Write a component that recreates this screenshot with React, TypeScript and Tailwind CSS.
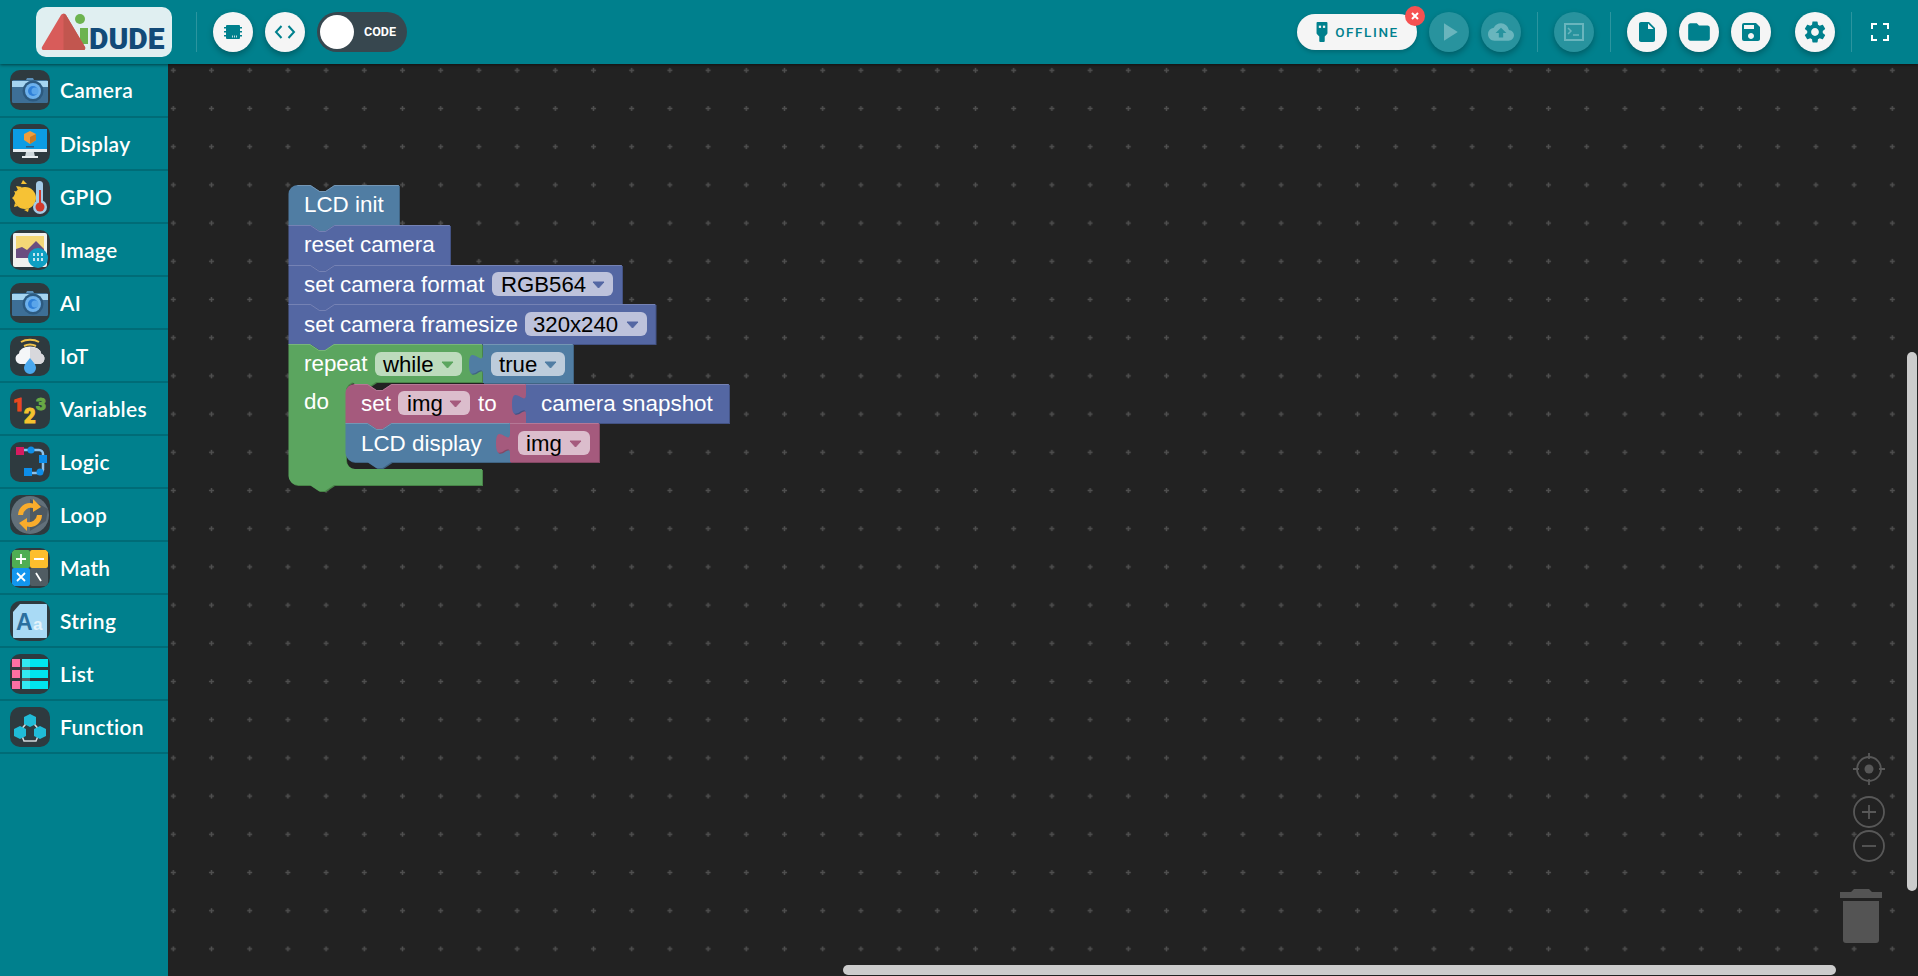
import type { ReactNode } from 'react'
import { MdCloudUpload, MdFolder, MdInsertDriveFile, MdPlayArrow, MdSave, MdSettings } from 'react-icons/md'

const TEAL = '#00808d'

const CameraIcon = () => (
  <>
    <path d="M8 10 h8 l1-2 h6 l1 2 h8 v4 H8z" fill="#5a8fb8" />
    <rect x="2" y="10" width="36" height="23" rx="1.5" fill="#3d6f96" />
    <rect x="2" y="11" width="36" height="6" fill="#a5d4f0" />
    <circle cx="23" cy="21" r="10.5" fill="#2c5a80" />
    <circle cx="23" cy="21" r="8" fill="#6db1ec" />
    <circle cx="23" cy="21" r="5" fill="#2f80d8" />
    <circle cx="25" cy="21" r="3.5" fill="#5aa5ea" />
  </>
)

const ICONS: Record<string, ReactNode> = {
  Camera: <CameraIcon />,
  Display: (
    <>
      <rect x="3" y="5" width="34" height="23" fill="#0c9ce4" />
      <rect x="3" y="25" width="34" height="3" fill="#e9eef0" />
      <path d="M16 28h8l1 5h-10z" fill="#cfd8dc" />
      <rect x="12" y="32" width="16" height="2" fill="#e9eef0" />
      <path d="M20 7l6 3v6l-6 4-6-4v-6z" fill="#ef9d3c" />
      <path d="M20 13l6-3v6l-6 4z" fill="#c97a22" />
      <rect x="16" y="22" width="8" height="1.5" fill="#2c5a80" />
    </>
  ),
  GPIO: (
    <>
      <circle cx="15" cy="21" r="11" fill="#f6c235" />
      <path d="M4 14l5 1-3 3zM13 3l4 4h-6zM5 26l3 3-4 1zM2 21l3-3v6zM18 35l-4-2 5-2zM6 9l6 1-4 3z" fill="#f6c235" />
      <rect x="26" y="4" width="7" height="26" rx="3.5" fill="#a5cbe6" />
      <circle cx="30" cy="30" r="7" fill="#a5cbe6" />
      <rect x="29" y="13" width="2" height="15" fill="#d3382b" />
      <circle cx="30" cy="30" r="4.5" fill="#d3382b" />
    </>
  ),
  Image: (
    <>
      <rect x="3" y="3" width="34" height="34" rx="2" fill="#f1f1ee" />
      <rect x="6" y="6" width="28" height="22" fill="#f4d777" />
      <path d="M6 28v-9l6-2 5 3 9-9 8 8v9z" fill="#6b4e80" />
      <circle cx="28" cy="28" r="10" fill="#0e9fc2" />
      <path d="M24 23v10M28 23v10M32 23v10" stroke="#fff" strokeWidth="1.5" strokeDasharray="3 2" />
    </>
  ),
  AI: <CameraIcon />,
  IoT: (
    <>
      <path d="M11 6c5-3 13-3 18 0M14 10c4-2 8-2 12 0" stroke="#f0c34a" strokeWidth="2" fill="none" />
      <path d="M10 28a5.500 5.500 0 0 1-1-10.500 11 7 0 0 1 22 0 5.500 5.500 0 0 1-1 10.500z" fill="#f4f6f8" />
      <path d="M20 11v17h10a5.500 5.500 0 0 0 1-10.500 11 7 0 0 0-11-6.500z" fill="#d8d8dc" />
      <path d="M20 22c4 5 6 7 6 10a6 6 0 0 1-12 0c0-3 2-5 6-10z" fill="#4aa8ee" />
    </>
  ),
  Variables: (
    <>
      <text x="3" y="22" fontFamily="Roboto" fontWeight="900" fontSize="19" fill="#e8471f" stroke="#e8471f">1</text>
      <text x="14" y="34" fontFamily="Roboto" fontWeight="900" fontSize="20" fill="#f5c32e" stroke="#f5c32e">2</text>
      <text x="26" y="21" fontFamily="Roboto" fontWeight="900" fontSize="17" fill="#68a945" stroke="#68a945">3</text>
    </>
  ),
  Logic: (
    <>
      <path d="M10 8h19a4 4 0 0 1 4 4v14a4 4 0 0 1-4 5H18" stroke="#8cc3ee" strokeWidth="2.500" fill="none" />
      <rect x="6" y="5" width="8" height="8" fill="#d81b60" />
      <circle cx="21" cy="8" r="3.500" fill="#0d8ee9" />
      <rect x="29" y="13" width="8" height="8" fill="#0d8ee9" />
      <circle cx="30" cy="30" r="3.500" fill="#0d8ee9" />
      <rect x="14" y="26" width="8" height="8" fill="#0d8ee9" />
    </>
  ),
  Loop: (
    <>
      <circle cx="20" cy="20" r="19" fill="#62707a" />
      <path d="M20 4L38 14 36 26 20 36z" fill="#4d5962" />
      <path d="M8 20a12 12 0 0 1 15-11.500V4l8 8-8 5v-4a8 8 0 0 0-10 7zM32 20a12 12 0 0 1-15 11.500V36l-8-8 8-5v4a8 8 0 0 0 10-7z" fill="#f8ac2c" />
    </>
  ),
  Math: (
    <>
      <rect x="2" y="2" width="18" height="18" fill="#4fae54" rx="2" />
      <rect x="20" y="2" width="18" height="18" fill="#fdbe2d" rx="2" />
      <rect x="2" y="20" width="18" height="18" fill="#1296ee" rx="2" />
      <rect x="20" y="20" width="18" height="18" fill="#505c63" rx="2" />
      <path d="M6 11h10M11 6v10M24 11h10M7 25l8 8M15 25l-8 8M26 25l5 8" stroke="#fff" strokeWidth="1.800" />
    </>
  ),
  String: (
    <>
      <path d="M10 3h26a1 1 0 0 1 1 1v32a1 1 0 0 1-1 1H4a1 1 0 0 1-1-1V11z" fill="#a9daf5" />
      <text x="6" y="29" fontFamily="Liberation Sans" fontWeight="700" fontSize="23" fill="#2b6f9e">A</text>
      <text x="23" y="29" fontFamily="Liberation Sans" fontWeight="700" fontSize="17" fill="#e4f3fb">a</text>
    </>
  ),
  List: (
    <>
      <rect x="2" y="5" width="8" height="8" fill="#ff6fa3" />
      <rect x="2" y="16" width="8" height="8" fill="#ff6fa3" />
      <rect x="2" y="27" width="8" height="8" fill="#ff6fa3" />
      <rect x="12" y="5" width="26" height="8" fill="#00e5ef" />
      <rect x="12" y="16" width="26" height="8" fill="#00e5ef" />
      <rect x="12" y="27" width="26" height="8" fill="#00e5ef" />
      <rect x="12" y="5" width="8" height="30" fill="#fff" opacity=".2" />
    </>
  ),
  Function: (
    <>
      <path d="M20 12L10 24l4 10h12l4-10z" fill="none" stroke="#d5dadd" strokeWidth="1.500" />
      <path d="M20 7l6 3v7l-6 3-6-3v-7z" fill="#20bcd8" />
      <path d="M10 19l6 3v7l-6 3-6-3v-7z" fill="#20bcd8" />
      <path d="M30 19l6 3v7l-6 3-6-3v-7z" fill="#20bcd8" />
    </>
  ),
}

const CATEGORIES = ['Camera', 'Display', 'GPIO', 'Image', 'AI', 'IoT', 'Variables', 'Logic', 'Loop', 'Math', 'String', 'List', 'Function']

const RoundBtn = ({ children, off }: { children: ReactNode; off?: boolean }) => (
  <button
    className={`flex h-10 w-10 shrink-0 items-center justify-center rounded-full shadow-[0_3px_6px_rgba(0,0,0,0.28)] ${
      off ? 'bg-[#28939e] text-[#69b5bd]' : 'bg-[#f5f5f5] text-[#00808d]'
    }`}
  >
    {children}
  </button>
)

const Divider = ({ cls }: { cls: string }) => <div className={`h-10 w-px shrink-0 bg-[#2b959f] ${cls}`} />

const Logo = () => (
  <div className="relative h-[50px] w-[136px] shrink-0 overflow-hidden rounded-[10px] bg-[#e0eff1]">
    <svg className="absolute left-0 top-0" width="136" height="50" viewBox="0 0 136 50">
      <circle cx="44" cy="12" r="5" fill="#6cb34f" />
      <rect x="44" y="21" width="8" height="16" fill="#6cb34f" />
      <path d="M25 8L6 40a2 2 0 0 0 2 3h39a2 2 0 0 0 2-3L30 8a3 3 0 0 0-5 0z" fill="#d85c5a" />
      <path d="M27.500 6.500a3 3 0 0 1 2.500 1.500L49 40a2 2 0 0 1-2 3H27.500z" fill="#c2564f" />
    </svg>
    <span className="absolute left-[53px] top-[15px] font-['Roboto'] text-[30px] font-black leading-[34px] text-[#124a78]">
      DUDE
    </span>
  </div>
)

const Header = () => (
  <header className="relative z-10 flex h-16 shrink-0 items-center bg-[#00808d] pl-9 shadow-[0_1px_3px_rgba(0,0,0,0.5)]">
    <Logo />
    <Divider cls="ml-6" />
    <div className="ml-4 flex items-center gap-3">
      <RoundBtn>
        <svg width="20" height="20" viewBox="0 0 20 20" fill="#00808d">
          <path d="M4 3h12a1 1 0 0 1 1 1v12a1 1 0 0 1-1 1H4a1 1 0 0 1-1-1V4a1 1 0 0 1 1-1z" />
          <path d="M1 5h2v1.500H1zM1 9h2v1.500H1zM1 13h2v1.500H1zM17 5h2v1.500h-2zM17 9h2v1.500h-2zM17 13h2v1.500h-2z" />
          <path d="M9 13.500h.8v2H9zM11 13.500h.8v2H11zM13 13.500h.8v2H13z" fill="#f5f5f5" />
        </svg>
      </RoundBtn>
      <RoundBtn>
        <svg width="22" height="16" viewBox="0 0 22 16" fill="none" stroke="#00808d" strokeWidth="2">
          <path d="M7.500 2L2 8l5.500 6M14.500 2L20 8l-5.500 6" />
        </svg>
      </RoundBtn>
      <div className="flex h-10 w-[90px] items-center rounded-full bg-[#37474f] pl-[3px]">
        <span className="h-[34px] w-[34px] rounded-full bg-white" />
        <span className="ml-[10px] font-['Roboto'] text-[12.5px] font-bold text-white">CODE</span>
      </div>
    </div>

    <div className="ml-auto flex items-center pr-[29px]">
      <div className="relative flex h-9 w-[120px] items-center justify-center gap-[6px] rounded-full bg-[#f5f5f5] shadow-[0_2px_4px_rgba(0,0,0,0.2)]">
        <svg width="14" height="20" viewBox="0 0 14 22" fill="#00808d">
          <path d="M2 0h10a1 1 0 0 1 1 1v11a2 2 0 0 1-.6 1.400L10 16v5a1 1 0 0 1-1 1H5a1 1 0 0 1-1-1v-5L1.600 13.400A2 2 0 0 1 1 12V1a1 1 0 0 1 1-1z" />
          <rect x="3.500" y="4" width="2.500" height="2.500" fill="#f5f5f5" />
          <rect x="8" y="4" width="2.500" height="2.500" fill="#f5f5f5" />
        </svg>
        <span className="font-['Roboto'] text-[13.5px] font-medium tracking-[1.6px] text-[#00808d]">OFFLINE</span>
        <span className="absolute right-[-8px] top-[-8px] flex h-5 w-5 items-center justify-center rounded-full bg-[#f55151]">
          <svg width="8" height="8" viewBox="0 0 8 8" stroke="#fff" strokeWidth="2">
            <path d="M1 1l6 6M7 1L1 7" />
          </svg>
        </span>
      </div>
      <div className="ml-3 flex gap-3">
        <RoundBtn off>
          <MdPlayArrow size={30} />
        </RoundBtn>
        <RoundBtn off>
          <MdCloudUpload size={26} />
        </RoundBtn>
      </div>
      <Divider cls="ml-4" />
      <div className="ml-4">
        <RoundBtn off>
          <svg width="20" height="18" viewBox="0 0 20 18" fill="none" stroke="#69b5bd" strokeWidth="2">
            <rect x="1" y="1" width="18" height="16" />
            <path d="M4 5l3 3-3 3M9 12h6" strokeWidth="1.500" />
          </svg>
        </RoundBtn>
      </div>
      <Divider cls="ml-4" />
      <div className="ml-4 flex gap-3">
        <RoundBtn>
          <MdInsertDriveFile size={24} />
        </RoundBtn>
        <RoundBtn>
          <MdFolder size={26} />
        </RoundBtn>
        <RoundBtn>
          <MdSave size={24} />
        </RoundBtn>
      </div>
      <div className="ml-6">
        <RoundBtn>
          <MdSettings size={26} />
        </RoundBtn>
      </div>
      <Divider cls="ml-4" />
      <svg className="ml-[19px]" width="18" height="18" viewBox="0 0 18 18" fill="none" stroke="#fff" strokeWidth="2">
        <path d="M1 6V1h5M12 1h5v5M17 12v5h-5M6 17H1v-5" />
      </svg>
    </div>
  </header>
)

const Sidebar = () => (
  <aside className="w-[168px] shrink-0 bg-[#00808d]">
    {CATEGORIES.map((name) => (
      <div key={name} className="flex h-[53px] items-center gap-[10px] border-b-2 border-[#006c77] pl-[10px] first:h-[54px]">
        <svg width="40" height="40" viewBox="0 0 40 40" className="shrink-0 rounded-[10px] bg-[#2e3a3f]">
          {ICONS[name]}
        </svg>
        <span className="font-['Lato'] text-[21px] font-semibold tracking-[0.3px] text-white">{name}</span>
      </div>
    ))}
  </aside>
)

type Blk = { x: number; y: number; w: number; h: number; fill: string; dark: string; light: string; roundTop?: boolean; roundBottom?: boolean; notch?: boolean; tab?: boolean }

const tabUp = 'c0,-14.500 -14,11.600 -14,-10.500 s14,3.600 14,-10.500'

function blockPath(b: Blk) {
  const { x, y, w, h } = b
  const top = b.roundTop ? `M${x},${y + 9} a9,9 0 0 1 9,-9` : `M${x},${y}`
  const nx = x + 22
  const notchTop = b.notch ? `L${nx},${y} l9,6 h6 l9,-6` : ''
  const notchBottom = b.notch ? `L${nx + 24},${y + h} l-9,6 h-6 l-9,-6` : ''
  const bl = b.roundBottom ? `L${x + 9},${y + h} a9,9 0 0 1 -9,-9` : `L${x},${y + h}`
  const left = b.tab ? `L${x},${y + 31} ${tabUp}` : ''
  return `${top} ${notchTop} L${x + w},${y} L${x + w},${y + h} ${notchBottom} ${bl} ${left} Z`
}

const Block = (b: Blk) => {
  const d = blockPath(b)
  return (
    <g>
      <path d={d} fill={b.dark} transform="translate(1 1)" />
      <path d={d} fill={b.fill} />
      <path
        d={`M${b.x + (b.roundTop ? 9 : 0)},${b.y + 0.5} ${b.notch ? `L${b.x + 22},${b.y + 0.5} l9,6 h6 l9,-6` : ''} L${b.x + b.w - 0.5},${b.y + 0.5}`}
        fill="none"
        stroke={b.light}
        strokeOpacity="0.6"
      />
    </g>
  )
}

const Repeat = () => {
  const d =
    'M288.500,344 L310,344 l9,6 h6 l9,-6 L482,344 L482,382 L376,382 l-9,6 h-6 l-9,-6 L355,382 a9,9 0 0 0 -9,9 L346,460 a9,9 0 0 0 9,9 L482,469 L482,485 L334,485 l-9,6 h-6 l-9,-6 L297.500,485 a9,9 0 0 1 -9,-9 Z'
  return (
    <g>
      <path d={d} fill="#488448" transform="translate(1 1)" />
      <path d={d} fill="#5ba55f" />
      <path d="M288.500,344.500 L310,344.500 l9,6 h6 l9,-6 L482,344.500" fill="none" stroke="#8cc08c" strokeOpacity="0.6" />
    </g>
  )
}

const Field = ({ x, y, w, fill, arrow, label, tx }: { x: number; y: number; w: number; fill: string; arrow: string; label: string; tx: number }) => (
  <g>
    <rect x={x} y={y} width={w} height={24} rx={6} fill={fill} />
    <text x={tx} y={y + 19.5} fill="#000" fontSize="22.200" fontFamily="Liberation Sans">
      {label}
    </text>
    <path d={`M${x + w - 20},${y + 10} h11 l-5.500,6 z`} fill={arrow} stroke={arrow} strokeLinejoin="round" />
  </g>
)

const Label = ({ x, y, children }: { x: number; y: number; children: string }) => (
  <text x={x} y={y} fill="#fff" fontSize="22.400" fontFamily="Liberation Sans">
    {children}
  </text>
)

const BLUE = { fill: '#5467a3', dark: '#435283', light: '#8c95c0' }
const STEEL = { fill: '#507da3', dark: '#406483', light: '#8ca6c0' }
const ROSE = { fill: '#a55a7d', dark: '#844864', light: '#c08ca6' }

const Workspace = () => (
  <div className="relative min-w-0 flex-1 overflow-hidden bg-[#222222]">
    <svg width="1750" height="912" viewBox="168 64 1750 912" className="block">
      <defs>
        <pattern id="dots" width="38.2" height="38.2" patternUnits="userSpaceOnUse" x="154.200" y="51.200">
          <path d="M16.600 19.100h5M19.100 16.600v5" stroke="#4f4f4f" strokeWidth="1.500" />
        </pattern>
      </defs>
      <rect x="168" y="64" width="1750" height="912" fill="url(#dots)" />

      <Block x={288.5} y={185} w={110.5} h={40} {...STEEL} roundTop notch />
      <Label x={304} y={212}>LCD init</Label>
      <Block x={288.5} y={225} w={161.5} h={40} {...BLUE} notch />
      <Label x={304} y={252}>reset camera</Label>
      <Block x={288.5} y={265} w={333.5} h={40} {...BLUE} notch />
      <Label x={304} y={292}>set camera format</Label>
      <Field x={492} y={272} w={121} fill="#bdc2db" arrow="#5467a3" label="RGB564" tx={501} />
      <Block x={288.5} y={304} w={367} h={40} {...BLUE} notch />
      <Label x={304} y={332}>set camera framesize</Label>
      <Field x={525} y={312} w={122} fill="#bdc2db" arrow="#5467a3" label="320x240" tx={533} />

      <Repeat />
      <Label x={304} y={371}>repeat</Label>
      <Field x={375} y={352} w={87} fill="#bddbbd" arrow="#5ba55f" label="while" tx={383} />
      <Label x={304} y={409}>do</Label>
      <Block x={483} y={344} w={90} h={39} {...STEEL} tab />
      <Field x={491} y={352} w={74} fill="#bdccdb" arrow="#507da3" label="true" tx={499} />

      <Block x={345.5} y={384} w={180.5} h={39} {...ROSE} roundTop notch />
      <Label x={361} y={411}>set</Label>
      <Field x={398} y={391} w={72} fill="#dbbdcc" arrow="#a55a7d" label="img" tx={407} />
      <Label x={478} y={411}>to</Label>
      <Block x={526} y={384} w={203} h={39} {...BLUE} tab />
      <Label x={541} y={411}>camera snapshot</Label>

      <Block x={345.5} y={423} w={164.5} h={39} {...STEEL} roundBottom notch />
      <Label x={361} y={451}>LCD display</Label>
      <Block x={510} y={423} w={89} h={39} {...ROSE} tab />
      <Field x={518} y={431} w={72} fill="#dbbdcc" arrow="#a55a7d" label="img" tx={526} />

      <g fill="none" stroke="#585858" strokeWidth="1.800">
        <circle cx="1869" cy="769" r="12" />
        <path d="M1869 753v6M1869 779v6M1853 769h6M1879 769h6" />
        <circle cx="1869" cy="812" r="15" />
        <path d="M1869 805v14M1862 812h14" />
        <circle cx="1869" cy="846" r="15" />
        <path d="M1862 846h14" />
      </g>
      <circle cx="1869" cy="769" r="4.500" fill="#585858" />
      <path d="M1840 892h11l3-3h15l3 3h10v6h-42z" fill="#545454" />
      <path d="M1843 901h36v39a3 3 0 0 1-3 3h-30a3 3 0 0 1-3-3z" fill="#545454" />
    </svg>
    <div className="absolute right-[1px] top-[288px] h-[539px] w-[10px] rounded-full bg-[#cccccc]" />
    <div className="absolute bottom-[1px] left-[675px] h-[10px] w-[993px] rounded-full bg-[#cccccc]" />
  </div>
)

export default function App() {
  return (
    <div className="flex h-[976px] w-[1918px] flex-col overflow-hidden" style={{ background: TEAL }}>
      <Header />
      <div className="flex min-h-0 flex-1">
        <Sidebar />
        <Workspace />
      </div>
    </div>
  )
}
